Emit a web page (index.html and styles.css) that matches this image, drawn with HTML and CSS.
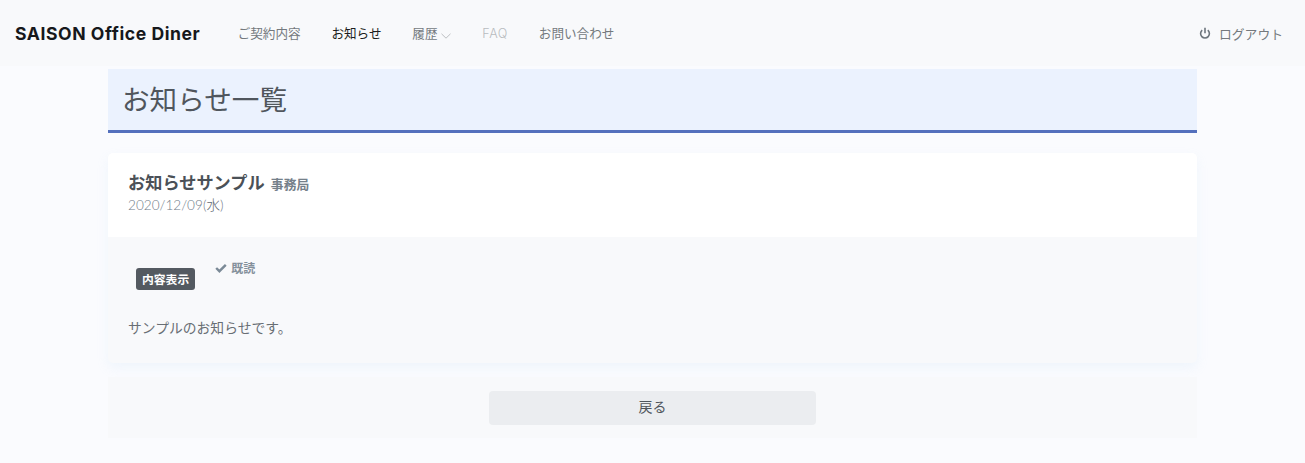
FILE: index.html
```html
<!DOCTYPE html>
<html lang="ja">
<head>
<meta charset="utf-8">
<title>お知らせ一覧</title>
<link rel="stylesheet" href="styles.css">
</head>
<body>
<header class="navbar">
  <a class="brand">SAISON Office Diner</a>
  <nav class="nav">
    <a class="nav-link">ご契約内容</a>
    <a class="nav-link nav-active">お知らせ</a>
    <a class="nav-link nav-drop">履歴<svg class="caret" width="10" height="6" viewBox="0 0 10 6"><path d="M.5.8 5 5.2 9.5.8" fill="none" stroke="#b5b8bb" stroke-width=".9"/></svg></a>
    <a class="nav-link nav-muted">FAQ</a>
    <a class="nav-link">お問い合わせ</a>
  </nav>
  <a class="logout"><svg class="power" width="12" height="13" viewBox="0 0 12 13"><path d="M3.2 3.2a4.4 4.4 0 1 0 5.6 0M6 .8v5.4" fill="none" stroke="#6c757d" stroke-width="1.6"/></svg>ログアウト</a>
</header>
<main class="container">
  <h1 class="page-title">お知らせ一覧</h1>
  <section class="card">
    <div class="card-head">
      <div class="card-title">お知らせサンプル <small class="sender">事務局</small></div>
      <div class="date">2020/12/09(<span class="weekday">水</span>)</div>
    </div>
    <div class="card-body">
      <div class="meta">
        <span class="badge">内容表示</span>
        <span class="read"><svg class="check" width="12" height="10" viewBox="0 0 12 10"><path d="M1.2 5 4.4 8.2 10.8 1.8" fill="none" stroke="#7b8a97" stroke-width="2.4"/></svg>既読</span>
      </div>
      <p class="message">サンプルのお知らせです。</p>
    </div>
  </section>
  <div class="actions">
    <button class="back" type="button">戻る</button>
  </div>
</main>
</body>
</html>
```
FILE: styles.css
```css
* { box-sizing: border-box; }
html, body { height: 100%; }
body {
  margin: 0;
  background: #fafbfe;
  color: #4f555b;
  font-family: "Lato", "Noto Sans CJK JP", sans-serif;
  font-size: 13px;
  overflow: hidden;
}
.navbar {
  display: flex;
  align-items: center;
  height: 66px;
  padding: 0 22px 0 15px;
  background: #f8f9fb;
}
.brand {
  font-family: "Inter", "Noto Sans CJK JP", sans-serif;
  font-weight: 700;
  font-size: 17.6px;
  letter-spacing: .55px;
  color: #16181b;
  margin-right: 22px;
  white-space: nowrap;
}
.nav { display: flex; flex: 1; align-items: center; padding-bottom: 1px; }
.nav-link {
  padding: 0 15.4px;
  color: #74797e;
  font-size: 12.6px;
  white-space: nowrap;
}
.nav-active { color: #1c1e21; }
.nav-muted { color: #b9bcbf; font-family: "Inter", sans-serif; font-weight: 300; letter-spacing: .6px; padding-top: 1px; }
.caret { margin-left: 4px; vertical-align: -1px; }
.logout { display: flex; align-items: center; color: #74797e; font-size: 12.8px; }
.power { margin-right: 8px; }
.container {
  width: 1089px;
  margin: 3px auto 0 108px;
}
.page-title {
  margin: 0;
  height: 64px;
  padding: 0 14px 3px;
  display: flex;
  align-items: center;
  background: #ebf2fe;
  border-bottom: 3px solid #5470bd;
  color: #50565d;
  font-size: 27.6px;
  font-weight: 400;
}
.card {
  margin-top: 20px;
  border-radius: 5px;
  background: #f8f9fb;
  box-shadow: 0 5px 12px rgba(180, 210, 240, .14);
}
.card-head {
  height: 84px;
  padding: 19px 20px;
  background: #fff;
  border-radius: 5px 5px 0 0;
}
.card-title { font-size: 17.2px; font-weight: 700; line-height: 22px; color: #4b5157; }
.sender { font-size: 12.8px; font-weight: 700; color: #75808a; margin-left: 2px; }
.date { font-size: 13.6px; font-weight: 300; line-height: 20px; color: #6f7c88; }
.weekday { color: #5f6972; font-size: 13.6px; }
.card-body { height: 126px; padding: 0 20px; }
.meta { display: flex; align-items: flex-start; padding: 22px 0 0 8px; height: 82px; }
.badge {
  margin-top: 9px;
  height: 22px;
  padding: 0 6px 2px;
  display: flex;
  align-items: center;
  background: #545a61;
  border-radius: 3px;
  color: #fff;
  font-size: 11.8px;
  font-weight: 700;
}
.read {
  display: flex;
  align-items: center;
  margin-left: 20px;
  color: #84909b;
  font-size: 12px;
  font-weight: 700;
}
.check { margin-right: 4px; }
.message { margin: 0; font-size: 13.8px; line-height: 18px; color: #686e74; }
.actions {
  margin-top: 14px;
  height: 61px;
  display: flex;
  justify-content: center;
  align-items: center;
  background: #f8f9fb;
}
.back {
  width: 327px;
  height: 34px;
  border: 0;
  border-radius: 4px;
  padding: 0 0 3px;
  background: #ebedf0;
  color: #50565d;
  font-family: inherit;
  font-size: 14px;
}
```
